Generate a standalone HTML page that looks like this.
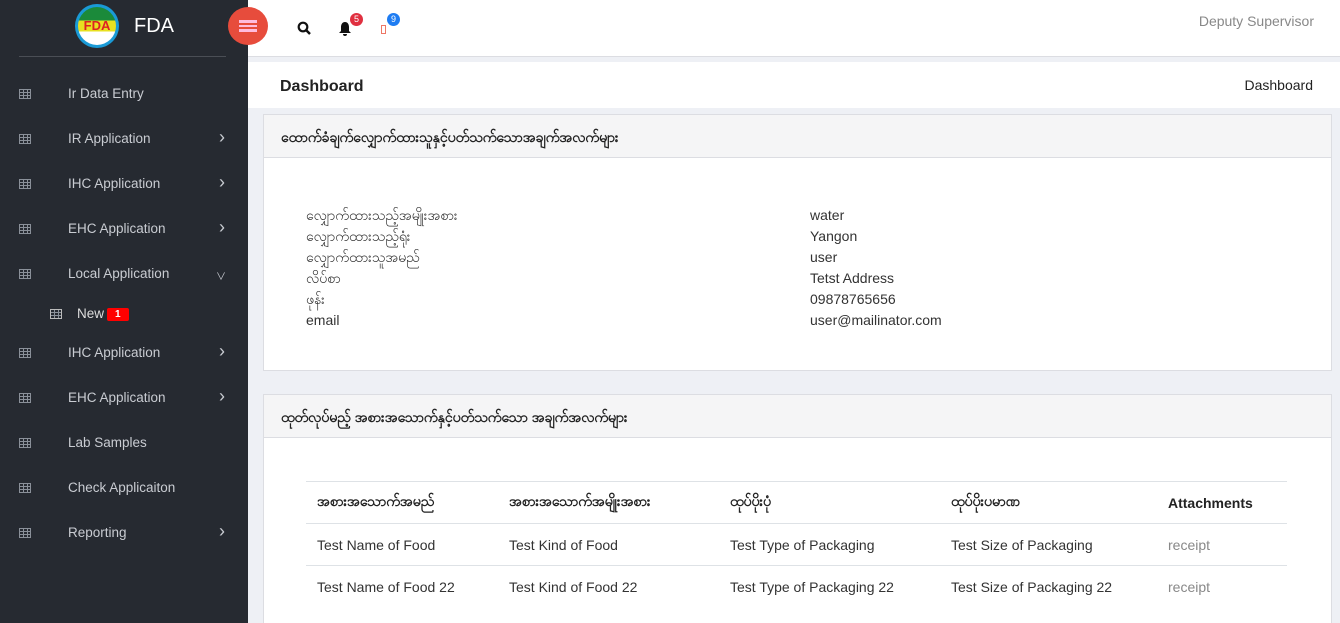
<!DOCTYPE html>
<html><head><meta charset="utf-8"><style>
*{box-sizing:border-box;margin:0;padding:0}
html{width:1340px;height:623px;overflow:hidden}
body{width:1340px;height:623px;overflow:hidden;font-family:"Liberation Sans","Noto Sans CJK SC",sans-serif;background:#eef0f5;position:relative;font-size:14px;color:#333}
.sb{position:absolute;left:0;top:0;width:248px;height:623px;background:#262a31}
.logo{position:absolute;left:75px;top:4px;width:44px;height:44px;border-radius:50%;background:#1a9ad6;overflow:hidden}
.logo i{position:absolute;left:3px;top:3px;width:38px;height:38px;border-radius:50%;background:linear-gradient(#1b8a3a 0 35%,#e8e020 35% 65%,#fff 65%)}
.logo b{position:absolute;left:0;width:44px;top:14px;text-align:center;color:#d22;font-size:13px;font-weight:bold}
.brand{position:absolute;left:134px;top:15px;color:#fff;font-size:20px}
.hr{position:absolute;left:19px;top:56px;width:207px;height:1px;background:#4a4e55}
.mi{position:absolute;left:0;width:248px;color:#c9ccd2;font-size:13.5px}
.mi .ic{position:absolute;left:19px;top:2px;width:12px;height:10px;border:1px solid #8a9099;background:repeating-linear-gradient(90deg,transparent 0 3px,#8a9099 3px 4px),repeating-linear-gradient(transparent 0 2px,#8a9099 2px 3px)}
.mi .t{position:absolute;left:68px;top:-1px}
.mi .ch{position:absolute;left:219px;top:-5px;font-size:18px;color:#c9ccd2}
.top{position:absolute;left:248px;top:0;right:0;height:57px;background:#fff;border-bottom:1px solid #dcdde2}
.tog{position:absolute;left:228px;top:7px;width:40px;height:38px;border-radius:50%;background:#e74c3c}
.tog i{position:absolute;left:11px;top:13px;width:18px;height:12px;border-top:3px solid #fbd;border-bottom:3px solid #fbd;background:linear-gradient(transparent 2px,#fbd 2px 4px,transparent 4px)}
.bdg{position:absolute;color:#fff;font-size:9px;border-radius:50%;width:13px;height:13px;text-align:center;line-height:13px}
.ph{position:absolute;left:248px;top:62px;right:0;height:46px;background:#fff}
.card{position:absolute;left:263px;width:1069px;background:#fff;border:1px solid #dcdde2}
.ch2{height:43px;background:#f5f5f6;border-bottom:1px solid #dcdde2;padding:13px 0 0 17px;font-weight:bold;font-size:14px;color:#222}
.row{position:absolute;font-size:14px;color:#333}
table{position:absolute;left:42px;top:86px;width:981px;border-collapse:collapse}
td,th{border-top:1px solid #dee2e6;height:42px;text-align:left;padding-left:11px;font-size:14px;color:#333}
th{font-weight:bold;color:#222}
</style></head><body>
<div class="sb">
<div class="logo"><i></i><b>FDA</b></div>
<div class="brand">FDA</div>
<div class="hr"></div>
<div class="mi" style="top:87px"><span class="ic"></span><span class="t">Ir Data Entry</span></div>
<div class="mi" style="top:132px"><span class="ic"></span><span class="t">IR Application</span><span class="ch">›</span></div>
<div class="mi" style="top:177px"><span class="ic"></span><span class="t">IHC Application</span><span class="ch">›</span></div>
<div class="mi" style="top:222px"><span class="ic"></span><span class="t">EHC Application</span><span class="ch">›</span></div>
<div class="mi" style="top:267px"><span class="ic"></span><span class="t">Local Application</span><span class="ch" style="font-size:10px;top:1px;left:216px">∨</span></div>
<div class="mi" style="top:307px"><span class="ic" style="left:50px;border-color:#bbb"></span><span class="t" style="left:77px;color:#ddd">New</span><span style="position:absolute;left:107px;top:1px;background:#f00;color:#fff;font-size:10px;font-weight:bold;padding:0 8px;border-radius:2px;height:13px;line-height:13px">1</span></div>
<div class="mi" style="top:346px"><span class="ic"></span><span class="t">IHC Application</span><span class="ch">›</span></div>
<div class="mi" style="top:391px"><span class="ic"></span><span class="t">EHC Application</span><span class="ch">›</span></div>
<div class="mi" style="top:436px"><span class="ic"></span><span class="t">Lab Samples</span></div>
<div class="mi" style="top:481px"><span class="ic"></span><span class="t">Check Applicaiton</span></div>
<div class="mi" style="top:526px"><span class="ic"></span><span class="t">Reporting</span><span class="ch">›</span></div>
</div>
<div class="top">
<svg style="position:absolute;left:49px;top:21px" width="14" height="14" viewBox="0 0 14 14"><circle cx="6" cy="6" r="4.3" fill="none" stroke="#111" stroke-width="2.2"/><path d="M9 9l4 4" stroke="#111" stroke-width="2.5"/></svg>
<svg style="position:absolute;left:90px;top:21px" width="14" height="15" viewBox="0 0 14 15"><path d="M7 1C4 1 3 4 3 6v4L1 12h12l-2-2V6c0-2-1-5-4-5zM5 13a2 2 0 004 0z" fill="#111"/></svg>
<span class="bdg" style="left:102px;top:13px;background:#e03040">5</span>
<span style="position:absolute;left:133px;top:25px;width:5px;height:9px;border:1px solid #e76"></span>
<span class="bdg" style="left:139px;top:13px;background:#1e7cf2">9</span>
<span style="position:absolute;right:26px;top:13px;color:#888;font-size:14px">Deputy Supervisor</span>
</div>
<div class="tog"><i></i></div>
<div class="ph"><span style="position:absolute;left:32px;top:16px;font-size:16px;font-weight:bold;color:#222">Dashboard</span><span style="position:absolute;right:27px;top:15px;font-size:14px;color:#222">Dashboard</span></div>
<div class="card" style="top:114px;height:257px">
<div class="ch2">ထောက်ခံချက်လျှောက်ထားသူနှင့်ပတ်သက်သောအချက်အလက်များ</div>
<div class="row" style="left:42px;top:90px;line-height:21px">လျှောက်ထားသည့်အမျိုးအစား<br>လျှောက်ထားသည့်ရုံး<br>လျှောက်ထားသူအမည်<br>လိပ်စာ<br>ဖုန်း<br>email</div>
<div class="row" style="left:546px;top:90px;line-height:21px">water<br>Yangon<br>user<br>Tetst Address<br>09878765656<br>user@mailinator.com</div>
</div>
<div class="card" style="top:394px;height:229px;border-bottom:none">
<div class="ch2">ထုတ်လုပ်မည့် အစားအသောက်နှင့်ပတ်သက်သော အချက်အလက်များ</div>
<table>
<tr><th style="width:192px">အစားအသောက်အမည်</th><th style="width:221px">အစားအသောက်အမျိုးအစား</th><th style="width:221px">ထုပ်ပိုးပုံ</th><th style="width:217px">ထုပ်ပိုးပမာဏ</th><th>Attachments</th></tr>
<tr><td>Test Name of Food</td><td>Test Kind of Food</td><td>Test Type of Packaging</td><td>Test Size of Packaging</td><td style="color:#888">receipt</td></tr>
<tr><td>Test Name of Food 22</td><td>Test Kind of Food 22</td><td>Test Type of Packaging 22</td><td>Test Size of Packaging 22</td><td style="color:#888">receipt</td></tr>
</table>
</div>
</body></html>
